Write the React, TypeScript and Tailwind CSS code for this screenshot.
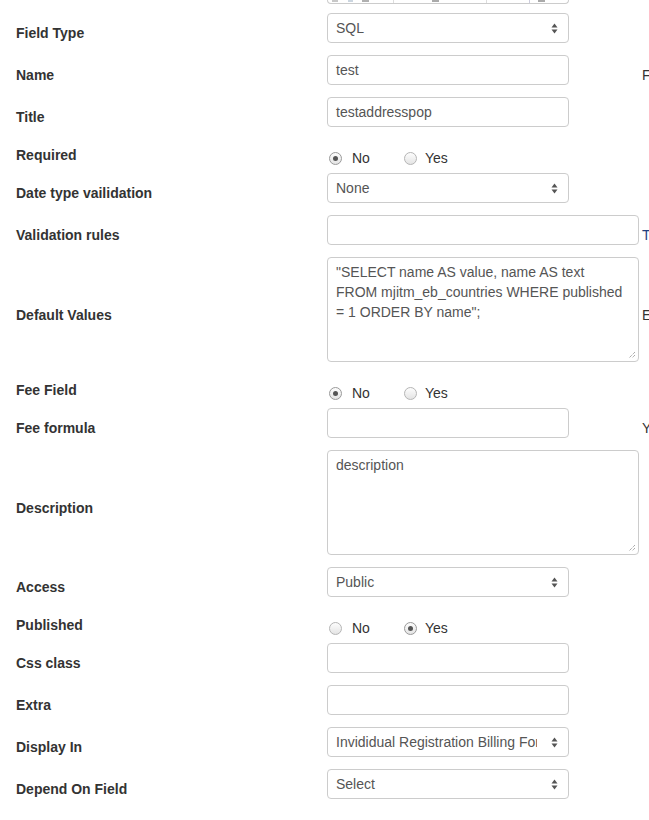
import React from "react";

const font = { fontFamily: '"Liberation Sans", Arial, Helvetica, sans-serif' };

function Arrows() {
  return (
    <svg width="7" height="11" viewBox="0 0 7 11" className="shrink-0">
      <path d="M3.5 0.5 L6.5 4.5 L0.5 4.5 Z" fill="#555" />
      <path d="M3.5 10.5 L6.5 6.5 L0.5 6.5 Z" fill="#555" />
    </svg>
  );
}

function Select({ value }: { value: string }) {
  return (
    <div className="w-[242px] h-[30px] border border-[#ccc] rounded-[4px] bg-white flex items-center pl-[8px] pr-[10px] text-[14px] text-[#555] leading-[20px]">
      <span className="flex-1 whitespace-nowrap overflow-hidden mr-[14px]">{value}</span>
      <Arrows />
    </div>
  );
}

function Input({ value = "", wide = false }: { value?: string; wide?: boolean }) {
  return (
    <div
      className={`${wide ? "w-[312px]" : "w-[242px]"} h-[30px] border border-[#ccc] rounded-[4px] bg-white flex items-center px-[8px] text-[14px] text-[#555] leading-[20px]`}
    >
      {value}
    </div>
  );
}

function TextArea({ lines }: { lines: string[] }) {
  return (
    <div className="relative w-[312px] h-[105px] border border-[#ccc] rounded-[4px] bg-white px-[8px] pt-[4px] text-[14px] text-[#555] leading-[20px]">
      {lines.map((l, i) => (
        <div key={i} className="whitespace-nowrap">
          {l}
        </div>
      ))}
      <svg width="8" height="8" viewBox="0 0 8 8" className="absolute right-[2px] bottom-[2px]">
        <path d="M7 1 L1 7 M7 4 L4 7" stroke="#888" strokeWidth="1" strokeDasharray="1 1" />
      </svg>
    </div>
  );
}

function Radio({ checked }: { checked: boolean }) {
  return (
    <div
      className={`w-[13px] h-[13px] rounded-full border ${
        checked ? "border-[#9a9a9a]" : "border-[#b5b5b5]"
      } bg-gradient-to-b from-[#fdfdfd] to-[#e4e4e4] flex items-center justify-center`}
    >
      {checked && <div className="w-[5px] h-[5px] rounded-full bg-[#555]" />}
    </div>
  );
}

function Radios({ yes }: { yes: boolean }) {
  return (
    <div className="flex items-center pt-[9px] text-[14px] text-[#333] leading-[20px]">
      <div className="pl-[2px]">
        <Radio checked={!yes} />
      </div>
      <span className="ml-[10px] w-[52px]">No</span>
      <Radio checked={yes} />
      <span className="ml-[8px]">Yes</span>
    </div>
  );
}

function Row({
  label,
  children,
  help,
  helpColor = "text-[#333]",
}: {
  label: string;
  children: React.ReactNode;
  help?: string;
  helpColor?: string;
}) {
  return (
    <div className="flex items-center mb-[12px]">
      <div className="w-[327px] pl-[16px] pt-[10px] text-[14px] font-bold text-[#333] leading-[20px] shrink-0">
        {label}
      </div>
      <div className="w-[315px] shrink-0">{children}</div>
      {help && (
        <div className={`pt-[10px] text-[14px] leading-[20px] whitespace-nowrap ${helpColor}`}>{help}</div>
      )}
    </div>
  );
}

function RadioRow({ label, yes }: { label: string; yes: boolean }) {
  return (
    <div className="flex items-start h-[22px] mb-[12px]">
      <div className="w-[327px] pl-[16px] pt-[6px] text-[14px] font-bold text-[#333] leading-[20px] shrink-0">
        {label}
      </div>
      <div>
        <Radios yes={yes} />
      </div>
    </div>
  );
}

export default function App() {
  return (
    <div className="w-[649px] h-[820px] bg-white overflow-hidden" style={font}>
      <div className="flex mb-[9px]">
        <div className="w-[327px] shrink-0" />
        <div className="relative w-[242px] h-[4px] border-b border-l border-r border-[#ccc] rounded-b-[4px] overflow-hidden">
          <div className="absolute top-0 left-[4px] w-[6px] h-[2px] bg-[#c8c8c8]" />
          <div className="absolute top-0 left-[20px] w-[5px] h-[2px] bg-[#ccd6e0]" />
          <div className="absolute top-0 left-[34px] w-[7px] h-[2px] bg-[#b0b0b0]" />
          <div className="absolute top-0 left-[65px] w-[1px] h-[3px] bg-[#ddd]" />
          <div className="absolute top-0 left-[104px] w-[7px] h-[2px] bg-[#aaa]" />
          <div className="absolute top-0 left-[158px] w-[1px] h-[3px] bg-[#ddd]" />
          <div className="absolute top-0 left-[201px] w-[1px] h-[3px] bg-[#ccd]" />
          <div className="absolute top-0 left-[210px] w-[7px] h-[2px] bg-[#aaa]" />
        </div>
      </div>

      <Row label="Field Type">
        <Select value="SQL" />
      </Row>
      <Row label="Name" help="F">
        <Input value="test" />
      </Row>
      <Row label="Title">
        <Input value="testaddresspop" />
      </Row>
      <RadioRow label="Required" yes={false} />
      <Row label="Date type vailidation">
        <Select value="None" />
      </Row>
      <Row label="Validation rules" help="T" helpColor="text-[#1f3f7f]">
        <Input wide />
      </Row>
      <Row label="Default Values" help="E">
        <TextArea
          lines={[
            '"SELECT name AS value, name AS text',
            "FROM mjitm_eb_countries WHERE published",
            '= 1 ORDER BY name";',
          ]}
        />
      </Row>
      <RadioRow label="Fee Field" yes={false} />
      <Row label="Fee formula" help="Y">
        <Input />
      </Row>
      <Row label="Description">
        <TextArea lines={["description"]} />
      </Row>
      <Row label="Access">
        <Select value="Public" />
      </Row>
      <RadioRow label="Published" yes={true} />
      <Row label="Css class">
        <Input />
      </Row>
      <Row label="Extra">
        <Input />
      </Row>
      <Row label="Display In">
        <Select value="Invididual Registration Billing Form" />
      </Row>
      <Row label="Depend On Field">
        <Select value="Select" />
      </Row>
    </div>
  );
}
